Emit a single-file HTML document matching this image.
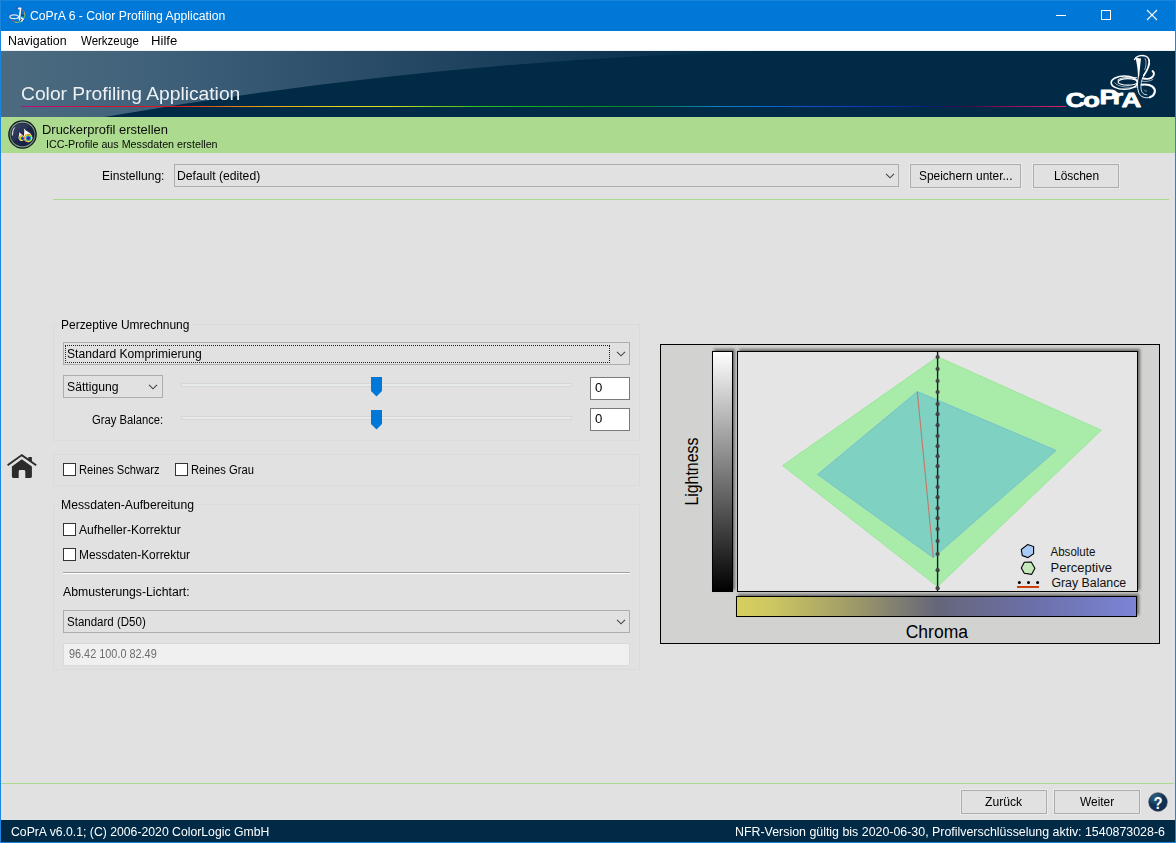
<!DOCTYPE html><html lang="de"><head><meta charset="utf-8"><title>CoPrA 6 - Color Profiling Application</title>
<style>
html,body{margin:0;padding:0;background:#e1e1e1;}
body{width:1176px;height:843px;overflow:hidden;position:relative;font-family:'Liberation Sans',sans-serif;}
#win{position:absolute;left:0;top:0;width:1176px;height:843px;background:#e1e1e1;overflow:hidden;}
.abs{position:absolute;box-sizing:border-box;}
.tx{position:absolute;white-space:nowrap;line-height:normal;transform-origin:0 0;font-family:'Liberation Sans',sans-serif;}
.combo{position:absolute;box-sizing:border-box;border:1px solid #adadad;background:#e1e1e1;}
.btn{position:absolute;box-sizing:border-box;border:1px solid #adadad;background:#e1e1e1;outline:1px solid #e9e9e9;outline-offset:0;}
.grp{position:absolute;box-sizing:border-box;border:1px solid #dbdbdb;}
.cb{position:absolute;box-sizing:border-box;width:13px;height:13px;border:1px solid #333;background:#fff;}
.track{position:absolute;box-sizing:border-box;height:4px;border:1px solid #d6d6d6;background:#e7eaea;}
.vbox{position:absolute;box-sizing:border-box;border:1px solid #7a7a7a;background:#fff;}
svg{position:absolute;overflow:visible;}
</style></head><body><div id="win">
<div class="abs" style="left:0;top:0;width:1176px;height:31px;background:#0078d7"></div>
<svg class="abs" style="left:8px;top:6px" width="20" height="20" viewBox="8 6 20 20">
<defs>
<linearGradient id="tiR" x1="0" y1="0" x2="1" y2="1"><stop offset="0" stop-color="#20b0e0"/><stop offset="0.25" stop-color="#3040c0"/><stop offset="0.4" stop-color="#c02080"/><stop offset="0.55" stop-color="#f04030"/><stop offset="0.7" stop-color="#f0d020"/><stop offset="0.85" stop-color="#40c040"/><stop offset="1" stop-color="#20a0a0"/></linearGradient>
</defs>
<circle cx="17.5" cy="15.1" r="7.4" fill="none" stroke="url(#tiR)" stroke-width="0.9" opacity="0.85"/>
<path d="M20.4 8.4 C21.4 9.4 21 13 20.6 15.2 L24 15.2" fill="none" stroke="#0a2a50" stroke-width="1" opacity="0.8"/>
<ellipse cx="14.2" cy="16.7" rx="4.3" ry="1.9" fill="none" stroke="#e8e8e8" stroke-width="1.2"/>
<path d="M18.7 8.4 L20.6 8.4 C20.4 12 19.8 15 19.4 18.6 C19.4 20.4 21 21.4 22.4 20.6 C23.6 19.8 23.2 18.2 21.6 18.2" fill="none" stroke="#f4f4f4" stroke-width="1.7" stroke-linejoin="round" stroke-linecap="round"/>
<circle cx="20.6" cy="20.3" r="0.7" fill="#10182a"/>
<path d="M22.6 21.4 Q24.2 21 23.8 19.6" fill="none" stroke="#0a2a50" stroke-width="0.8" opacity="0.8"/>
</svg>

<div class="tx" style="left:30.1px;top:8.74px;font-size:12px;color:#fff;transform:scaleX(1.0165)">CoPrA 6 - Color Profiling Application</div>
<div class="abs" style="left:1056px;top:15px;width:10px;height:1px;background:#fff"></div>
<div class="abs" style="left:1101px;top:10px;width:10px;height:10px;border:1px solid #fff"></div>
<svg class="abs" style="left:1147px;top:10px" width="10" height="10" viewBox="0 0 10 10"><path d="M0 0 L10 10 M10 0 L0 10" stroke="#fff" stroke-width="1.1" fill="none"/></svg>
<div class="abs" style="left:1px;top:31px;width:1174px;height:20px;background:#fff;border-bottom:1px solid #f0f0f0"></div>
<div class="tx" style="left:7.7px;top:33.64px;font-size:12px;color:#000;transform:scaleX(1.0345)">Navigation</div><div class="tx" style="left:80.6px;top:33.64px;font-size:12px;color:#000;transform:scaleX(0.9567)">Werkzeuge</div><div class="tx" style="left:151.2px;top:33.64px;font-size:12px;color:#000;transform:scaleX(1.0933)">Hilfe</div>
<svg class="abs" style="left:1px;top:51px" width="1174" height="66" viewBox="1 51 1174 66">
<defs>
<clipPath id="bnClip"><rect x="1" y="51" width="1174" height="66"/></clipPath>
<linearGradient id="bnLight" x1="1" y1="0" x2="770" y2="0" gradientUnits="userSpaceOnUse">
<stop offset="0" stop-color="#4c6b80"/><stop offset="0.2" stop-color="#40617a"/><stop offset="0.45" stop-color="#2c4e6a"/><stop offset="0.7" stop-color="#163c59"/><stop offset="0.9" stop-color="#062f4c"/><stop offset="1" stop-color="#002a46"/>
</linearGradient>
<linearGradient id="bnRain" x1="21" y1="0" x2="1066" y2="0" gradientUnits="userSpaceOnUse">
<stop offset="0" stop-color="#b01088"/><stop offset="0.023" stop-color="#c80a6a"/><stop offset="0.072" stop-color="#d81030"/><stop offset="0.15" stop-color="#e01818"/><stop offset="0.171" stop-color="#e04010"/><stop offset="0.194" stop-color="#e07010"/><stop offset="0.231" stop-color="#e8a010"/><stop offset="0.267" stop-color="#e8b810"/><stop offset="0.303" stop-color="#e8d818"/><stop offset="0.352" stop-color="#d8e020"/><stop offset="0.389" stop-color="#90d020"/><stop offset="0.437" stop-color="#30c020"/><stop offset="0.487" stop-color="#10b020"/><stop offset="0.554" stop-color="#109020"/><stop offset="0.59" stop-color="#108038"/><stop offset="0.627" stop-color="#107878"/><stop offset="0.664" stop-color="#1080c0"/><stop offset="0.7" stop-color="#1070d0"/><stop offset="0.749" stop-color="#1050d0"/><stop offset="0.798" stop-color="#1038c0"/><stop offset="0.838" stop-color="#1028a0"/><stop offset="0.874" stop-color="#101870"/><stop offset="0.9" stop-color="#300a50"/><stop offset="0.927" stop-color="#700a50"/><stop offset="0.954" stop-color="#a01060"/><stop offset="0.989" stop-color="#d0206a"/><stop offset="1" stop-color="#d8206a"/>
</linearGradient>
</defs>
<rect x="1" y="51" width="1174" height="66" fill="#002a46"/>
<path clip-path="url(#bnClip)" d="M1 51 L770 51 L770 51.2 Q430 59.5 90 119.5 L1 119.5 Z" fill="url(#bnLight)"/>
<rect x="21" y="106" width="1045" height="1" fill="url(#bnRain)"/>
</svg>

<div class="tx" style="left:20.6px;top:83.26px;font-size:18.5px;color:#eef2f5;transform:scaleX(1.0403)">Color Profiling Application</div>
<svg class="abs" style="left:1060px;top:52px" width="104" height="60" viewBox="1060 52 104 60">
<g transform="translate(1100 52) scale(0.05928)" fill="none" stroke="#fff" stroke-linecap="round" stroke-linejoin="round">
<!-- coils -->
<clipPath id="lgClip"><rect x="100" y="350" width="545" height="340"/></clipPath>
<g clip-path="url(#lgClip)">
<ellipse cx="410" cy="518" rx="222" ry="112" stroke-width="26"/>
<ellipse cx="470" cy="505" rx="165" ry="55" stroke-width="20"/>
<path d="M300 470 C360 425 480 420 620 432" stroke-width="14"/>
<path d="M250 520 C300 590 450 600 620 595" stroke-width="12" opacity="0.8"/>
</g>
<!-- hood -->
<path d="M600 95 L692 108 C680 220 668 320 662 405 L640 425 C642 300 622 200 600 95 Z" fill="#fff" stroke="none"/>
<path d="M583 128 C610 62 700 48 770 70 C800 80 820 105 828 140" stroke-width="24"/>
<path d="M828 140 C845 230 790 320 738 398" stroke-width="30"/>
<path d="M762 110 C790 170 775 240 755 300" stroke-width="12" opacity="0.85"/>
<!-- body -->
<path d="M648 410 C628 500 622 600 655 690 C680 755 760 790 840 765" stroke-width="16"/>
<path d="M738 398 C700 470 680 560 695 640 C705 690 740 725 790 722" stroke-width="14"/>
<path d="M840 765 C930 735 955 640 885 585 C840 550 770 545 705 552" stroke-width="36"/>
<path d="M745 640 C760 665 780 670 790 655" stroke-width="10" opacity="0.8"/>
<!-- tail right -->
<path d="M722 445 C800 462 880 450 905 392 C916 362 902 335 886 322" stroke-width="32"/>
<path d="M702 492 C770 504 840 496 892 464" stroke-width="12" opacity="0.85"/>
</g>
<g font-family="'Liberation Sans', sans-serif" font-weight="700" fill="#fff" stroke="#fff" stroke-width="0.75" stroke-linejoin="round">
<text transform="scale(1.37 1)" font-size="20" x="777.66 790.66 802.48 811.97 818.61" y="107.4 107.4 103.6 103.6 107.5">CoPrA</text>
</g>
</svg>

<div class="abs" style="left:1px;top:117px;width:1174px;height:36px;background:#acdb8f"></div>
<svg class="abs" style="left:7px;top:119px" width="32" height="32" viewBox="7 119 32 32">
<defs>
<linearGradient id="drD" x1="0" y1="0" x2="1" y2="1"><stop offset="0" stop-color="#3a4464"/><stop offset="0.45" stop-color="#283252"/><stop offset="0.5" stop-color="#1b2646"/><stop offset="1" stop-color="#17244a"/></linearGradient>
<linearGradient id="drRing" x1="0" y1="0" x2="0" y2="1"><stop offset="0" stop-color="#8fae97"/><stop offset="0.5" stop-color="#4f6a5c"/><stop offset="1" stop-color="#7d9a86"/></linearGradient>
<radialGradient id="drR1" cx="28.4" cy="138.2" r="4.5" gradientUnits="userSpaceOnUse"><stop offset="0" stop-color="#5a10a0"/><stop offset="0.28" stop-color="#4020c0"/><stop offset="0.45" stop-color="#2090e8"/><stop offset="0.58" stop-color="#30c848"/><stop offset="0.72" stop-color="#f0e828"/><stop offset="0.86" stop-color="#f07820"/><stop offset="1" stop-color="#f8c0a8"/></radialGradient>
<radialGradient id="drR2" cx="22.6" cy="138.4" r="3.9" gradientUnits="userSpaceOnUse"><stop offset="0" stop-color="#3010a0"/><stop offset="0.25" stop-color="#2838d0"/><stop offset="0.45" stop-color="#28c050"/><stop offset="0.62" stop-color="#f0e828"/><stop offset="0.82" stop-color="#f08820"/><stop offset="1" stop-color="#f8c8b0"/></radialGradient>
<clipPath id="drC1"><path d="M23.8 128.2 C25.6 131.2 30.4 132 31.6 135.4 A4.3 4.3 0 1 1 23.8 137.9 C23.9 134.5 24.8 131.5 23.8 128.2 Z"/></clipPath>
<clipPath id="drC2"><path d="M19.1 132 C20.2 134 23.2 134.6 24 136.6 A2.9 2.9 0 1 1 18.6 137.9 C18.7 135.6 19.7 134 19.1 132 Z"/></clipPath>
</defs>
<circle cx="22.5" cy="134.5" r="14.3" fill="#10131f"/>
<circle cx="22.5" cy="134.5" r="12.4" fill="none" stroke="url(#drRing)" stroke-width="1.4"/>
<circle cx="22.5" cy="134.5" r="11.2" fill="url(#drD)"/>
<path d="M11.8 135.6 Q11.6 129.4 15.4 126.6 Q13.2 130.2 12.9 135.4 Z" fill="#fff" opacity="0.8"/>
<g clip-path="url(#drC2)"><rect x="17" y="131" width="9" height="11" fill="#fff"/><circle cx="21.5" cy="137.9" r="2.95" fill="url(#drR2)"/></g>
<g clip-path="url(#drC1)"><rect x="22" y="127" width="12" height="16" fill="#fff"/><circle cx="28.1" cy="137.9" r="4.35" fill="url(#drR1)"/></g>
</svg>

<div class="tx" style="left:42.4px;top:121.58px;font-size:13.5px;color:#0a0a0a;transform:scaleX(0.9591)">Druckerprofil erstellen</div><div class="tx" style="left:46.3px;top:138.03px;font-size:10.8px;color:#0a0a0a;transform:scaleX(0.9927)">ICC-Profile aus Messdaten erstellen</div>
<div class="tx" style="left:102.3px;top:168.84px;font-size:12px;color:#000;transform:scaleX(1.0067)">Einstellung:</div>
<div class="combo" style="left:174px;top:164px;width:725px;height:23px"></div>
<div class="tx" style="left:177.0px;top:168.84px;font-size:12px;color:#000;transform:scaleX(1.0143)">Default (edited)</div>
<svg class="abs" style="left:885px;top:173px" width="10" height="6" viewBox="0 0 10 6"><path d="M1 0.8 L5 4.8 L9 0.8" fill="none" stroke="#444" stroke-width="1.1"/></svg>
<div class="btn" style="left:910px;top:164px;width:111px;height:24px"></div><div class="tx" style="left:918.6px;top:168.84px;font-size:12px;color:#000;transform:scaleX(0.9935)">Speichern unter...</div>
<div class="btn" style="left:1033px;top:164px;width:86px;height:24px"></div><div class="tx" style="left:1053.6px;top:168.84px;font-size:12px;color:#000;transform:scaleX(0.9954)">Löschen</div>
<div class="abs" style="left:53px;top:199px;width:1116px;height:1px;background:#acdb8f"></div>
<div class="grp" style="left:53px;top:324px;width:587px;height:117px"></div>
<div class="abs" style="left:59px;top:316px;width:133px;height:16px;background:#e1e1e1"></div>
<div class="tx" style="left:61.0px;top:317.94px;font-size:12px;color:#000;transform:scaleX(0.9976)">Perzeptive Umrechnung</div>
<div class="combo" style="left:63px;top:342px;width:567px;height:23px"></div>
<div class="abs" style="left:65px;top:345px;width:545px;height:18px;border:1px dotted #222"></div>
<div class="tx" style="left:66.6px;top:346.84px;font-size:12px;color:#000;transform:scaleX(1.0095)">Standard Komprimierung</div>
<svg class="abs" style="left:616px;top:351px" width="10" height="6" viewBox="0 0 10 6"><path d="M1 0.8 L5 4.8 L9 0.8" fill="none" stroke="#444" stroke-width="1.1"/></svg>
<div class="combo" style="left:63px;top:375px;width:100px;height:23px"></div>
<div class="tx" style="left:66.5px;top:380.04px;font-size:12px;color:#000;transform:scaleX(1.0162)">Sättigung</div>
<svg class="abs" style="left:148px;top:384px" width="10" height="6" viewBox="0 0 10 6"><path d="M1 0.8 L5 4.8 L9 0.8" fill="none" stroke="#444" stroke-width="1.1"/></svg>
<div class="track" style="left:181px;top:383px;width:391px"></div>
<svg class="abs" style="left:371px;top:377px" width="11" height="20" viewBox="0 0 11 20"><path d="M0 0 H11 V14 L5.5 19.5 L0 14 Z" fill="#0078d7"/></svg>
<div class="vbox" style="left:590px;top:377px;width:40px;height:23px"></div><div class="tx" style="left:595.4px;top:380.94px;font-size:12px;color:#000;transform:scaleX(1.0957)">0</div>
<div class="tx" style="left:92.1px;top:412.64px;font-size:12px;color:#000;transform:scaleX(0.9356)">Gray Balance:</div>
<div class="track" style="left:181px;top:416px;width:391px"></div>
<svg class="abs" style="left:371px;top:410px" width="11" height="20" viewBox="0 0 11 20"><path d="M0 0 H11 V14 L5.5 19.5 L0 14 Z" fill="#0078d7"/></svg>
<div class="vbox" style="left:590px;top:408px;width:40px;height:23px"></div><div class="tx" style="left:595.4px;top:411.74px;font-size:12px;color:#000;transform:scaleX(1.0957)">0</div>
<svg class="abs" style="left:6px;top:453px" width="32" height="26" viewBox="6 453 32 26">
<path d="M7.6 465.2 L21.8 455.1 L36.2 465.2" fill="none" stroke="#2b2b2b" stroke-width="1.9" stroke-linejoin="miter"/>
<path d="M28.3 457.4 Q28.3 457 28.7 457 L31.5 457 Q31.9 457 31.9 457.4 L31.9 462.2 L28.3 459.7 Z" fill="#2b2b2b"/>
<path d="M21.8 459.3 L31.9 466.5 L31.9 476.6 Q31.9 478 30.5 478 L25.3 478 L25.3 471.4 Q25.3 470 23.9 470 L20.1 470 Q18.7 470 18.7 471.4 L18.7 478 L13.3 478 Q11.9 478 11.9 476.6 L11.9 466.5 Z" fill="#2b2b2b"/>
</svg>

<div class="grp" style="left:53px;top:454px;width:587px;height:32px"></div>
<div class="cb" style="left:63px;top:463px"></div><div class="tx" style="left:79.1px;top:463.14px;font-size:12px;color:#000;transform:scaleX(0.9294)">Reines Schwarz</div>
<div class="cb" style="left:175px;top:463px"></div><div class="tx" style="left:190.9px;top:463.14px;font-size:12px;color:#000;transform:scaleX(0.9344)">Reines Grau</div>
<div class="grp" style="left:53px;top:504px;width:587px;height:166px"></div>
<div class="abs" style="left:59px;top:497px;width:138px;height:16px;background:#e1e1e1"></div>
<div class="tx" style="left:61.3px;top:498.14px;font-size:12px;color:#000;transform:scaleX(1.0171)">Messdaten-Aufbereitung</div>
<div class="cb" style="left:63px;top:523px"></div><div class="tx" style="left:79.4px;top:523.14px;font-size:12px;color:#000;transform:scaleX(1.0109)">Aufheller-Korrektur</div>
<div class="cb" style="left:63px;top:548px"></div><div class="tx" style="left:79.0px;top:547.84px;font-size:12px;color:#000;transform:scaleX(0.9910)">Messdaten-Korrektur</div>
<div class="abs" style="left:63px;top:572px;width:567px;height:2px;border-top:1px solid #a0a0a0;border-bottom:1px solid #fff"></div>
<div class="tx" style="left:63.2px;top:584.84px;font-size:12px;color:#000;transform:scaleX(1.0203)">Abmusterungs-Lichtart:</div>
<div class="combo" style="left:63px;top:610px;width:567px;height:23px"></div>
<div class="tx" style="left:66.5px;top:614.94px;font-size:12px;color:#000;transform:scaleX(0.9598)">Standard (D50)</div>
<svg class="abs" style="left:616px;top:619px" width="10" height="6" viewBox="0 0 10 6"><path d="M1 0.8 L5 4.8 L9 0.8" fill="none" stroke="#444" stroke-width="1.1"/></svg>
<div class="abs" style="left:63px;top:643px;width:567px;height:23px;border:1px solid #d9d9d9;background:#f0f0f0"></div>
<div class="tx" style="left:68.6px;top:646.94px;font-size:12px;color:#6d6d6d;transform:scaleX(0.9065)">96.42 100.0 82.49</div>
<svg class="abs" style="left:655px;top:338px" width="512" height="312" viewBox="655 338 512 312" font-family="'Liberation Sans', sans-serif">
<defs>
<linearGradient id="chL" x1="0" y1="0" x2="0" y2="1"><stop offset="0" stop-color="#ffffff"/><stop offset="0.25" stop-color="#bcbcbc"/><stop offset="0.5" stop-color="#7c7c7c"/><stop offset="0.75" stop-color="#3e3e3e"/><stop offset="1" stop-color="#000000"/></linearGradient>
<linearGradient id="chC" x1="0" y1="0" x2="1" y2="0"><stop offset="0" stop-color="#d6ce5c"/><stop offset="0.08" stop-color="#cfc862"/><stop offset="0.3" stop-color="#9c9868"/><stop offset="0.5" stop-color="#65667a"/><stop offset="0.75" stop-color="#6c70aa"/><stop offset="1" stop-color="#7c84d6"/></linearGradient>
<filter id="chSh" x="-20%" y="-20%" width="140%" height="140%"><feGaussianBlur stdDeviation="1.4"/></filter>
</defs>
<rect x="660.5" y="344.5" width="499" height="299" fill="#d2d2d0" stroke="#000" stroke-width="1"/>
<g filter="url(#chSh)" fill="#000" opacity="0.5">
<rect x="714" y="349" width="21" height="241"/>
<rect x="738" y="594" width="401" height="21"/>
<rect x="739" y="349" width="401" height="241"/>
</g>
<rect x="712.5" y="351.5" width="20" height="240" fill="url(#chL)" stroke="#000" stroke-width="1"/>
<rect x="736.5" y="596.5" width="400" height="20" fill="url(#chC)" stroke="#000" stroke-width="1"/>
<rect x="737.5" y="351.5" width="400" height="240" fill="#e5e5e5" stroke="#000" stroke-width="1"/>
<polygon points="937.6,356.8 1101.3,430.2 937.6,586.6 782.6,465.6" fill="#a9ecaa" stroke="#9ae79b" stroke-width="1"/>
<polygon points="917.3,391.6 1056.2,450.4 933.3,557.6 817.6,474.5" fill="#7fd1c1" stroke="#77c2cb" stroke-width="1"/>
<line x1="917.3" y1="391.8" x2="933.3" y2="557.4" stroke="#c4786a" stroke-width="1.1"/>
<line x1="937.6" y1="352" x2="937.6" y2="591" stroke="#06231a" stroke-width="1.4"/>
<g fill="#444">
<circle cx="937.6" cy="357" r="2.1"/><circle cx="937.6" cy="369" r="2.1"/><circle cx="937.6" cy="381" r="2.1"/><circle cx="937.6" cy="392" r="2.1"/><circle cx="937.6" cy="404" r="2.1"/><circle cx="937.6" cy="414.2" r="2.1"/><circle cx="937.6" cy="425.2" r="2.1"/><circle cx="937.6" cy="436" r="2.1"/><circle cx="937.6" cy="446.2" r="2.1"/><circle cx="937.6" cy="456.2" r="2.1"/><circle cx="937.6" cy="466.2" r="2.1"/><circle cx="937.6" cy="477" r="2.1"/><circle cx="937.6" cy="487" r="2.1"/><circle cx="937.6" cy="497.2" r="2.1"/><circle cx="937.6" cy="508.2" r="2.1"/><circle cx="937.6" cy="518.2" r="2.1"/><circle cx="937.6" cy="529" r="2.1"/><circle cx="937.6" cy="541" r="2.1"/><circle cx="937.6" cy="554" r="2.1"/><circle cx="937.6" cy="570.2" r="2.1"/><circle cx="937.6" cy="588.2" r="2.1"/>
</g>
<polygon points="1027.6,544.6 1033.6,546.6 1033.6,553.6 1027.9,557.6 1022.3,555.6 1021.3,549.6" fill="#a8cbf7" stroke="#000" stroke-width="1.1"/>
<polygon points="1024.3,562.2 1031.2,562 1034.9,568.2 1031.6,574.4 1024.3,573.2 1021.3,567.9" fill="#c5e8bb" stroke="#000" stroke-width="1.1"/>
<circle cx="1019.4" cy="582.4" r="1.5" fill="#000"/><circle cx="1028.5" cy="582.4" r="1.5" fill="#000"/><circle cx="1037.6" cy="582.4" r="1.5" fill="#000"/>
<rect x="1017" y="586" width="22" height="1.9" fill="#c83800"/>
<g font-size="12" fill="#111">
<text x="1050.5" y="555.6" textLength="44.9" lengthAdjust="spacingAndGlyphs">Absolute</text>
<text x="1050.5" y="571.7" textLength="61.4" lengthAdjust="spacingAndGlyphs">Perceptive</text>
<text x="1051.4" y="586.9" textLength="74.8" lengthAdjust="spacingAndGlyphs">Gray Balance</text>
</g>
<text x="905.7" y="637.8" font-size="18" fill="#000" textLength="62.3" lengthAdjust="spacingAndGlyphs">Chroma</text>
<text transform="translate(698.2,505.6) rotate(-90)" x="0" y="0" font-size="18" fill="#000" textLength="68" lengthAdjust="spacingAndGlyphs">Lightness</text>
</svg>

<div class="abs" style="left:1px;top:783px;width:1173px;height:1px;background:#acdb8f"></div>
<div class="btn" style="left:961px;top:790px;width:86px;height:24px"></div><div class="tx" style="left:984.7px;top:795.14px;font-size:12px;color:#000;transform:scaleX(1.0124)">Zurück</div>
<div class="btn" style="left:1054px;top:790px;width:86px;height:24px"></div><div class="tx" style="left:1080.0px;top:795.14px;font-size:12px;color:#000;transform:scaleX(0.9927)">Weiter</div>
<svg class="abs" style="left:1147px;top:791px" width="22" height="22" viewBox="1147 791 22 22">
<defs>
<radialGradient id="hpG" cx="0.35" cy="0.25" r="0.75"><stop offset="0" stop-color="#2d5f80"/><stop offset="0.45" stop-color="#1c4566"/><stop offset="0.5" stop-color="#123458"/><stop offset="1" stop-color="#0f2c52"/></radialGradient>
</defs>
<circle cx="1158" cy="802" r="9.3" fill="url(#hpG)" stroke="#3a3f4a" stroke-width="0.6"/>
<text transform="translate(1158.1,808.8) scale(0.87,1.02)" x="0" y="0" font-family="'Liberation Sans', sans-serif" font-size="17" font-weight="700" fill="#fff" text-anchor="middle">?</text>
</svg>

<div class="abs" style="left:1px;top:820px;width:1174px;height:22px;background:#002a46"></div>
<div class="tx" style="left:11.1px;top:825.14px;font-size:12px;color:#fff;transform:scaleX(1.0190)">CoPrA v6.0.1; (C) 2006-2020 ColorLogic GmbH</div><div class="tx" style="left:734.9px;top:825.14px;font-size:12px;color:#fff;transform:scaleX(1.0329)">NFR-Version gültig bis 2020-06-30, Profilverschlüsselung aktiv: 1540873028-6</div>
<div class="abs" style="left:0;top:0;width:1px;height:843px;background:#1c86df"></div>
<div class="abs" style="left:1175px;top:0;width:1px;height:843px;background:#1c86df"></div>
<div class="abs" style="left:0;top:842px;width:1176px;height:1px;background:#1c86df"></div>
<div class="abs" style="left:0;top:0;width:1176px;height:1px;background:#1a84dc"></div>
</div></body></html>
